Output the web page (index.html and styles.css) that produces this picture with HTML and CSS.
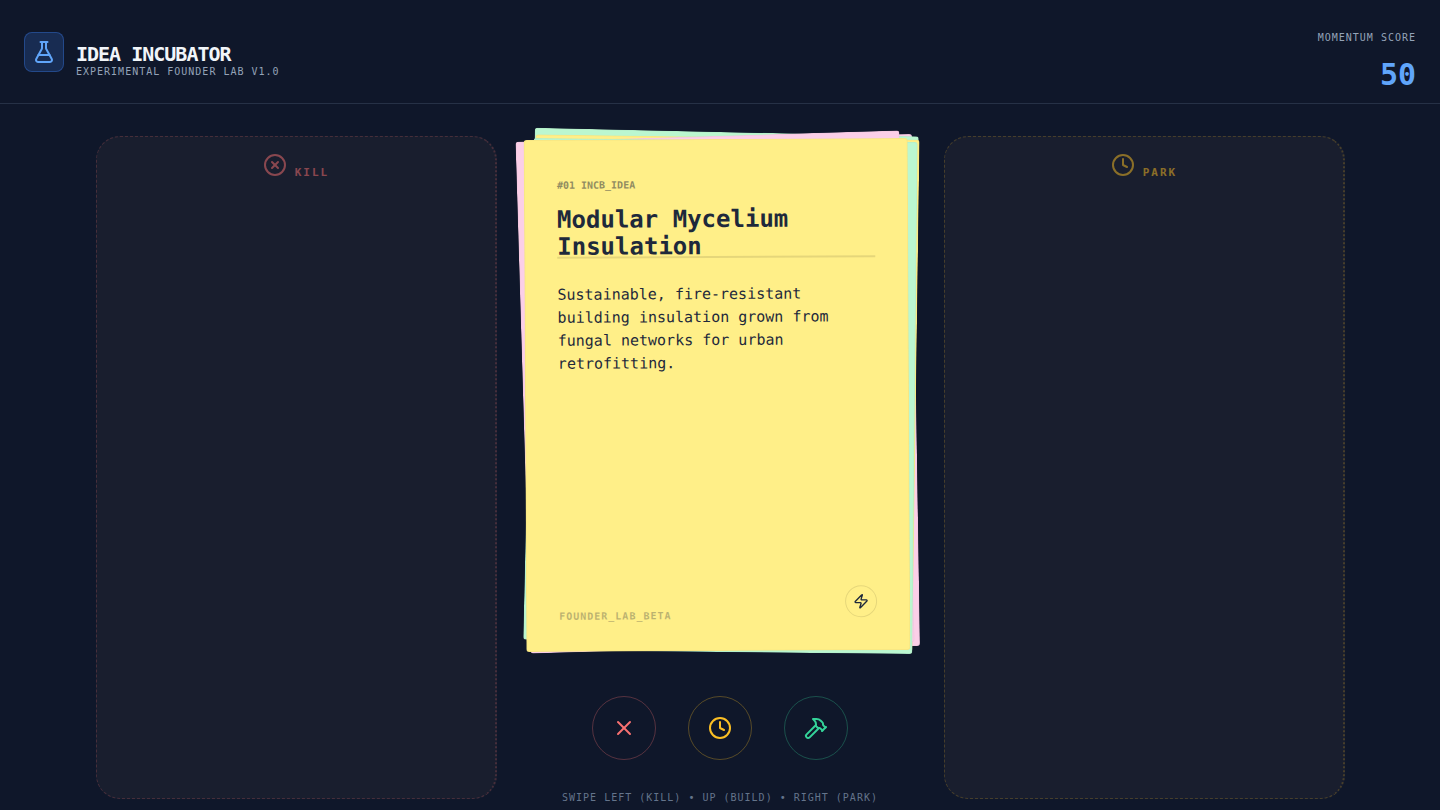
FILE: index.html
```
<!DOCTYPE html>
<html lang="en">
<head>
<meta charset="UTF-8">
<meta name="viewport" content="width=device-width, initial-scale=1">
<title>Idea Incubator</title>
<link rel="stylesheet" href="styles.css">
</head>
<body>

<header class="header">
    <div class="brand">
        <div class="logo">
            <svg class="icon" viewBox="0 0 24 24"><path d="M14 2v6a2 2 0 0 0 .245.96l5.51 10.08A2 2 0 0 1 18 22H6a2 2 0 0 1-1.755-2.96l5.51-10.08A2 2 0 0 0 10 8V2"/><path d="M6.453 15h11.094"/><path d="M8.5 2h7"/></svg>
        </div>
        <div class="brand-text">
            <h1>IDEA INCUBATOR</h1>
            <p>EXPERIMENTAL FOUNDER LAB V1.0</p>
        </div>
    </div>
    <div class="score">
        <div class="score-label">MOMENTUM SCORE</div>
        <div class="score-value">50</div>
    </div>
</header>

<main class="board">
    <section class="zone zone-kill">
        <div class="zone-label">
            <svg class="icon" viewBox="0 0 24 24"><circle cx="12" cy="12" r="10"/><path d="m15 9-6 6"/><path d="m9 9 6 6"/></svg>
            <span>KILL</span>
        </div>
    </section>

    <div class="center">
        <div class="stack">
            <div class="card pink back-1"></div>
            <div class="card green back-2"></div>
            <div class="card yellow back-3"></div>
            <div class="card pink back-4"></div>
            <div class="card green back-5"></div>
            <article class="card yellow front">
                <div class="card-id">#01 INCB_IDEA</div>
                <h2>Modular Mycelium Insulation</h2>
                <p>Sustainable, fire-resistant building insulation grown from fungal networks for urban retrofitting.</p>
                <div class="card-footer">
                    <span>FOUNDER_LAB_BETA</span>
                    <div class="zap">
                        <svg class="icon" viewBox="0 0 24 24"><path d="M4 14a1 1 0 0 1-.78-1.63l9.9-10.2a.5.5 0 0 1 .86.46l-1.92 6.02A1 1 0 0 0 13 10h7a1 1 0 0 1 .78 1.63l-9.9 10.2a.5.5 0 0 1-.86-.46l1.92-6.02A1 1 0 0 0 11 14z"/></svg>
                    </div>
                </div>
            </article>
        </div>

        <div class="actions">
            <button class="action kill" type="button" aria-label="Kill">
                <svg class="icon" viewBox="0 0 24 24"><path d="M18 6 6 18"/><path d="m6 6 12 12"/></svg>
            </button>
            <button class="action park" type="button" aria-label="Park">
                <svg class="icon" viewBox="0 0 24 24"><circle cx="12" cy="12" r="10"/><path d="M12 6v6l4 2"/></svg>
            </button>
            <button class="action build" type="button" aria-label="Build">
                <svg class="icon" viewBox="0 0 24 24"><path d="m15 12-9.373 9.373a1 1 0 0 1-3.001-3L12 9"/><path d="m18 15 4-4"/><path d="m21.5 11.5-1.914-1.914A2 2 0 0 1 19 8.172v-.344a2 2 0 0 0-.586-1.414l-1.657-1.657A6 6 0 0 0 12.516 3H9l1.243 1.243A6 6 0 0 1 12 8.485V10l2 2h1.172a2 2 0 0 1 1.414.586L18.5 14.5"/></svg>
            </button>
        </div>

        <p class="hint">SWIPE LEFT (KILL) • UP (BUILD) • RIGHT (PARK)</p>
    </div>

    <section class="zone zone-park">
        <div class="zone-label">
            <svg class="icon" viewBox="0 0 24 24"><circle cx="12" cy="12" r="10"/><path d="M12 6v6l4 2"/></svg>
            <span>PARK</span>
        </div>
    </section>
</main>

</body>
</html>
```
FILE: styles.css
```
* {
    box-sizing: border-box;
    margin: 0;
    padding: 0;
}
body {
    min-height: 100vh;
    display: flex;
    flex-direction: column;
    background: #0f172a;
    color: #f1f5f9;
    font-family: "DejaVu Sans Mono", monospace;
    font-size: 10px;
}
.icon {
    display: block;
    width: 24px;
    height: 24px;
    fill: none;
    stroke: currentColor;
    stroke-width: 2;
    stroke-linecap: round;
    stroke-linejoin: round;
}

/* Header */
.header {
    display: flex;
    justify-content: space-between;
    align-items: center;
    padding: 12px 24px;
    border-bottom: 1px solid #263146;
}
.brand {
    display: flex;
    align-items: center;
    gap: 12px;
}
.logo {
    display: flex;
    align-items: center;
    justify-content: center;
    width: 40px;
    height: 40px;
    border: 1px solid rgba(59, 130, 246, 0.35);
    border-radius: 8px;
    background: rgba(59, 130, 246, 0.2);
    color: #60a5fa;
}
.brand-text {
    padding-top: 14px;
}
.brand h1 {
    font-size: 20px;
    line-height: 26px;
    letter-spacing: -1px;
}
.brand p {
    line-height: 10px;
    letter-spacing: 1px;
    color: #94a3b8;
}
.score {
    padding-top: 18px;
    text-align: right;
}
.score-label {
    line-height: 16px;
    letter-spacing: 1px;
    color: #94a3b8;
}
.score-value {
    margin-top: 13px;
    font-size: 30px;
    font-weight: bold;
    line-height: 32px;
    color: #60a5fa;
}

/* Board */
.board {
    flex: 1;
    display: grid;
    grid-template-columns: 1fr 384px 1fr;
    gap: 32px;
    padding: 32px 96px 11px;
}
.zone {
    margin-right: -1px;
    padding-top: 16px;
    border: 1px dashed;
    border-right: 2px dotted;
    border-radius: 24px;
    background: #191e2e;
}
.zone-kill {
    border-color: rgba(248, 113, 113, 0.2);
}
.zone-park {
    border-color: rgba(251, 191, 36, 0.2);
}
.zone-label {
    display: flex;
    justify-content: center;
    align-items: flex-end;
    gap: 8px;
    font-size: 11px;
    font-weight: bold;
    line-height: 8px;
    letter-spacing: 2px;
    opacity: 0.5;
}
.zone-kill .zone-label {
    color: #f87171;
}
.zone-park .zone-label {
    color: #fbbf24;
}
.center {
    display: flex;
    flex-direction: column;
    align-items: center;
    padding-top: 4px;
}

/* Cards */
.stack {
    position: relative;
    width: 384px;
    height: 512px;
}
.card {
    position: absolute;
    inset: 0;
    border: 1px solid rgba(0, 0, 0, 0.03);
    border-radius: 3px;
}
.yellow {
    background: #ffef88;
}
.pink {
    background: #fbcfe8;
}
.green {
    background: #bbf7d0;
}
.back-1 {
    transform: translate(4px, -3px) rotate(-0.9deg);
}
.back-2 {
    transform: translate(1px, -8px) rotate(1.3deg);
}
.back-3 {
    transform: translate(4px, -3px) rotate(0.8deg);
}
.back-4 {
    transform: translate(-5px, -4px) rotate(-1.7deg);
}
.back-5 {
    transform: translate(3px, 0) rotate(0.6deg);
}
.front {
    display: flex;
    flex-direction: column;
    padding: 37px 32px 32px;
    color: #1e293b;
    transform: translate(-3px, -1px) rotate(-0.3deg);
}
.card-id {
    line-height: 16px;
    font-weight: bold;
    opacity: 0.5;
}
.card h2 {
    height: 52px;
    margin-top: 13px;
    border-bottom: 2px solid rgba(0, 0, 0, 0.1);
    font-size: 24px;
    line-height: 27px;
}
.card p {
    margin-top: 25px;
    font-size: 15px;
    line-height: 23px;
}
.card-footer {
    display: flex;
    justify-content: space-between;
    align-items: flex-end;
    margin-top: auto;
}
.card-footer span {
    line-height: 4px;
    font-weight: bold;
    letter-spacing: 1px;
    opacity: 0.3;
}
.zap {
    display: flex;
    align-items: center;
    justify-content: center;
    width: 32px;
    height: 32px;
    border: 1px solid rgba(0, 0, 0, 0.1);
    border-radius: 50%;
}
.zap .icon {
    width: 16px;
    height: 16px;
}

/* Actions */
.actions {
    display: flex;
    gap: 32px;
    margin-top: 44px;
}
.action {
    display: flex;
    align-items: center;
    justify-content: center;
    width: 64px;
    height: 64px;
    border: 1px solid;
    border-radius: 50%;
    background: none;
    cursor: pointer;
}
.kill {
    border-color: rgba(248, 113, 113, 0.3);
    color: #f87171;
}
.park {
    border-color: rgba(251, 191, 36, 0.3);
    color: #fbbf24;
}
.build {
    border-color: rgba(52, 211, 153, 0.3);
    color: #34d399;
}
.hint {
    margin: 30px 0 -7px;
    line-height: 16px;
    letter-spacing: 1px;
    white-space: nowrap;
    color: #64748b;
}
```
